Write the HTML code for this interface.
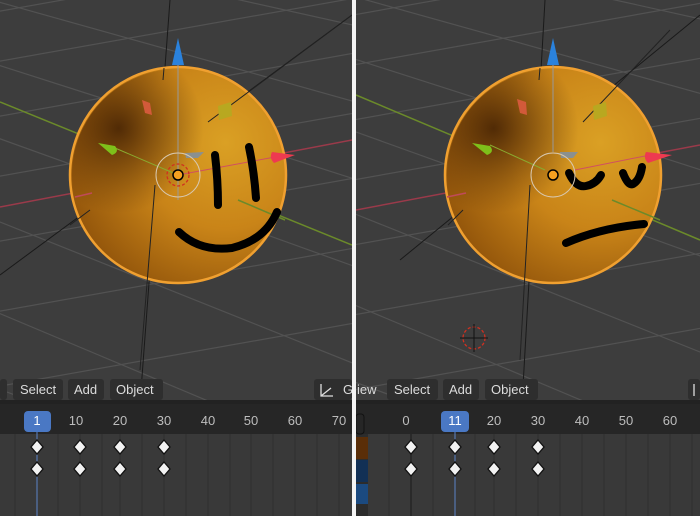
<!DOCTYPE html>
<html><head><style>
body{margin:0;width:700px;height:516px;overflow:hidden;background:#333;font-family:"Liberation Sans",sans-serif}
svg{display:block}
</style></head><body>
<svg width="700" height="516" viewBox="0 0 700 516" xmlns="http://www.w3.org/2000/svg">
<defs>
<clipPath id="cl"><rect x="0" y="0" width="352" height="404"/></clipPath>
<clipPath id="cr"><rect x="356" y="0" width="344" height="404"/></clipPath>
<radialGradient id="sg" cx="0.72" cy="0.35" r="0.8">
<stop offset="0" stop-color="#daa024"/><stop offset="0.5" stop-color="#c98418"/><stop offset="1" stop-color="#8f520a"/>
</radialGradient>
<radialGradient id="sh" cx="0.22" cy="0.28" r="0.4">
<stop offset="0" stop-color="#3e1d03" stop-opacity="0.85"/><stop offset="1" stop-color="#4a2505" stop-opacity="0"/>
</radialGradient>
<g id="grid" stroke="#525252" stroke-width="1.2" fill="none">
<path d="M-50 20 L400 -60 M-50 70 L400 -10 M-50 125 L400 45 M-50 185 L400 105 M-50 250 L400 170 M-50 320 L400 240 M-50 395 L400 315 M-50 470 L400 390"/>
<path d="M-80 -20 L420 120 M-80 40 L420 200 M-80 110 L420 290 M-80 190 L420 390 M-80 280 L420 490 M60 -40 L420 40 M-80 360 L300 500"/>
</g>
</defs>
<rect x="0" y="0" width="700" height="404" fill="#3d3d3d"/>
<!-- LEFT VIEWPORT -->
<g clip-path="url(#cl)">
<use href="#grid"/>
<line x1="0" y1="102" x2="352" y2="245" stroke="#6b8a2a" stroke-width="1.5"/>
<line x1="0" y1="207" x2="352" y2="140" stroke="#9a3a4a" stroke-width="1.5"/>
<line x1="170" y1="0" x2="140" y2="404" stroke="#1a1a1a" stroke-width="1"/>
<line x1="352" y1="15" x2="0" y2="275" stroke="#1a1a1a" stroke-width="1"/>
<ellipse cx="178" cy="175" rx="108" ry="108" fill="url(#sg)" stroke="#f0a030" stroke-width="2.5"/>
<ellipse cx="178" cy="175" rx="106" ry="106" fill="url(#sh)"/>
<line x1="164" y1="68" x2="163" y2="80" stroke="#222"/>
<line x1="352" y1="15" x2="208" y2="122" stroke="#222"/>
<line x1="155" y1="185" x2="140" y2="370" stroke="#222"/>
<line x1="90" y1="210" x2="70" y2="225" stroke="#222"/>
<line x1="75" y1="197" x2="92" y2="193" stroke="#c04a5a" stroke-width="1.5"/>
<line x1="238" y1="200" x2="285" y2="220" stroke="#6b8a2a" stroke-width="1.5"/>
<line x1="178" y1="60" x2="178" y2="200" stroke="#999" stroke-width="1"/>
<line x1="115" y1="148" x2="178" y2="175" stroke="#8aaa30" stroke-width="1"/>
<line x1="178" y1="175" x2="275" y2="157" stroke="#d05060" stroke-width="1"/>
<path d="M178 38 L172 65 L184 65 Z" fill="#2a82dd"/>
<path d="M272 152 L295 155 L274 163 Q269 158 272 152Z" fill="#ee3a50"/>
<path d="M98 143 L115 146 Q120 152 112 155 Z" fill="#7ec01a"/>
<path d="M142 100 L150 103 L152 115 L145 113Z" fill="#d25a3a"/>
<path d="M218 106 L231 102 L232 116 L219 120Z" fill="#b8a820"/>
<path d="M185 153 L204 152 L198 158 L186 158Z" fill="#8a9090"/>
<g stroke="#000" stroke-width="8" stroke-linecap="round" fill="none">
<path d="M215 155 Q218 180 218 205"/>
<path d="M249 147 Q254 170 256 198"/>
<path d="M179 232 Q200 252 232 248 Q265 240 277 212"/>
</g>
<circle cx="178" cy="175" r="22" fill="none" stroke="#d8c8b0" stroke-width="1"/>
<circle cx="178" cy="175" r="11" fill="none" stroke="#d03020" stroke-width="1.3" stroke-dasharray="3 2"/>
<circle cx="178" cy="175" r="5" fill="#f5a020" stroke="#000" stroke-width="1.5"/>
</g>
<!-- RIGHT VIEWPORT -->
<g clip-path="url(#cr)">
<g transform="translate(375,0)"><use href="#grid"/></g>
<line x1="356" y1="95" x2="700" y2="240" stroke="#6b8a2a" stroke-width="1.5"/>
<line x1="356" y1="210" x2="700" y2="145" stroke="#9a3a4a" stroke-width="1.5"/>
<line x1="545" y1="0" x2="522" y2="404" stroke="#1a1a1a"/>
<line x1="700" y1="15" x2="400" y2="260" stroke="#1a1a1a"/>
<ellipse cx="553" cy="175" rx="108" ry="108" fill="url(#sg)" stroke="#f0a030" stroke-width="2.5"/>
<ellipse cx="553" cy="175" rx="106" ry="106" fill="url(#sh)"/>
<line x1="540" y1="68" x2="539" y2="80" stroke="#222"/>
<line x1="670" y1="30" x2="583" y2="122" stroke="#222"/>
<line x1="530" y1="185" x2="520" y2="360" stroke="#222"/>
<line x1="463" y1="210" x2="448" y2="225" stroke="#222"/>
<line x1="447" y1="197" x2="466" y2="193" stroke="#c04a5a" stroke-width="1.5"/>
<line x1="612" y1="200" x2="660" y2="220" stroke="#6b8a2a" stroke-width="1.5"/>
<line x1="553" y1="60" x2="553" y2="152" stroke="#999"/>
<line x1="490" y1="145" x2="545" y2="170" stroke="#8aaa30"/>
<line x1="575" y1="170" x2="650" y2="155" stroke="#d05060"/>
<path d="M553 38 L547 65 L559 65 Z" fill="#2a82dd"/>
<path d="M646 152 L672 155 L648 163 Q643 158 646 152Z" fill="#ee3a50"/>
<path d="M472 143 L490 146 Q495 152 487 155 Z" fill="#7ec01a"/>
<path d="M517 99 L526 102 L527 115 L520 113Z" fill="#d25a3a"/>
<path d="M593 106 L606 102 L607 116 L594 120Z" fill="#b8a820"/>
<path d="M560 152 L578 152 L573 158 L561 158Z" fill="#8a9090"/>
<g stroke="#000" stroke-width="8" stroke-linecap="round" fill="none">
<path d="M569 173 Q576 188 586 186 Q596 184 601 175"/>
<path d="M623 173 Q628 186 633 184 Q640 180 642 167"/>
<path d="M566 243 Q600 228 644 224"/>
</g>
<circle cx="553" cy="175" r="22" fill="none" stroke="#d8c8b0" stroke-width="1"/>
<circle cx="553" cy="175" r="5" fill="#f5a020" stroke="#000" stroke-width="1.5"/>
<circle cx="474" cy="338" r="11" fill="none" stroke="#d03020" stroke-width="1.3" stroke-dasharray="3 2"/>
<path d="M474 324 V352 M460 338 H488" stroke="#111" stroke-width="1"/>
</g>
<!-- header buttons -->
<g font-size="13" fill="#dcdcdc">
<rect x="0" y="379" width="7" height="21" rx="3" fill="#2e2e2e"/>
<rect x="13" y="379" width="50" height="21" rx="3" fill="#2e2e2e"/><text x="20" y="394">Select</text>
<rect x="68" y="379" width="36" height="21" rx="3" fill="#2e2e2e"/><text x="74" y="394">Add</text>
<rect x="110" y="379" width="53" height="21" rx="3" fill="#2e2e2e"/><text x="116" y="394">Object</text>
<rect x="314" y="379" width="38" height="21" rx="3" fill="#2e2e2e"/>
<path d="M321 384 V396 H333 M321 396 L331 388" stroke="#ddd" fill="none" stroke-width="1.3"/><text x="343" y="394">G</text>
<text x="357" y="394">iew</text>
<rect x="387" y="379" width="51" height="21" rx="3" fill="#2e2e2e"/><text x="394" y="394">Select</text>
<rect x="443" y="379" width="36" height="21" rx="3" fill="#2e2e2e"/><text x="449" y="394">Add</text>
<rect x="485" y="379" width="53" height="21" rx="3" fill="#2e2e2e"/><text x="491" y="394">Object</text>
<rect x="688" y="379" width="12" height="21" rx="3" fill="#2e2e2e"/>
<path d="M694 384 V396" stroke="#ddd" stroke-width="1.3"/>
</g>
<rect x="0" y="400" width="700" height="4" fill="#222"/>
<!-- timeline -->
<rect x="0" y="404" width="352" height="112" fill="#393939"/>
<rect x="356" y="404" width="344" height="112" fill="#393939"/>
<rect x="0" y="404" width="352" height="30" fill="#262626"/>
<rect x="356" y="404" width="344" height="30" fill="#262626"/>
<g stroke="#2f2f2f" stroke-width="1">
<path d="M15 434V516M37 434V516M58 434V516M80 434V516M102 434V516M120 434V516M142 434V516M164 434V516M186 434V516M208 434V516M230 434V516M251 434V516M273 434V516M295 434V516M317 434V516M339 434V516"/>
<path d="M389 434V516M411 434V516M433 434V516M455 434V516M475 434V516M494 434V516M516 434V516M538 434V516M560 434V516M582 434V516M604 434V516M626 434V516M648 434V516M670 434V516M692 434V516"/>
</g>
<rect x="356" y="434" width="12" height="82" fill="#2c2c2c"/>
<rect x="356" y="437" width="12" height="22" fill="#5a2e08"/>
<rect x="356" y="460" width="12" height="22" fill="#123055"/>
<rect x="356" y="484" width="12" height="20" fill="#1b4a80"/>
<line x1="37" y1="430" x2="37" y2="516" stroke="#5a82c8"/>
<line x1="455" y1="430" x2="455" y2="516" stroke="#5a82c8"/>
<line x1="411" y1="434" x2="411" y2="516" stroke="#1a1a1a"/>
<rect x="356" y="414" width="8" height="20" rx="3" fill="none" stroke="#111"/>
<g font-size="13" fill="#bdbdbd" text-anchor="middle">
<rect x="24" y="411" width="27" height="21" rx="4" fill="#4a78c4"/>
<text x="37" y="425" fill="#fff">1</text>
<text x="76" y="425">10</text><text x="120" y="425">20</text><text x="164" y="425">30</text><text x="208" y="425">40</text><text x="251" y="425">50</text><text x="295" y="425">60</text><text x="339" y="425">70</text>
<text x="406" y="425">0</text>
<rect x="441" y="411" width="28" height="21" rx="4" fill="#4a78c4"/>
<text x="455" y="425" fill="#fff">11</text>
<text x="494" y="425">20</text><text x="538" y="425">30</text><text x="582" y="425">40</text><text x="626" y="425">50</text><text x="670" y="425">60</text>
</g>
<g fill="#f2f2f2" stroke="#111" stroke-width="1.3">
<path d="M0 -7 L6 0 L0 7 L-6 0Z" transform="translate(37,447)"/>
<path d="M0 -7 L6 0 L0 7 L-6 0Z" transform="translate(37,469)"/>
<path d="M0 -7 L6 0 L0 7 L-6 0Z" transform="translate(80,447)"/>
<path d="M0 -7 L6 0 L0 7 L-6 0Z" transform="translate(80,469)"/>
<path d="M0 -7 L6 0 L0 7 L-6 0Z" transform="translate(120,447)"/>
<path d="M0 -7 L6 0 L0 7 L-6 0Z" transform="translate(120,469)"/>
<path d="M0 -7 L6 0 L0 7 L-6 0Z" transform="translate(164,447)"/>
<path d="M0 -7 L6 0 L0 7 L-6 0Z" transform="translate(164,469)"/>
<path d="M0 -7 L6 0 L0 7 L-6 0Z" transform="translate(411,447)"/>
<path d="M0 -7 L6 0 L0 7 L-6 0Z" transform="translate(411,469)"/>
<path d="M0 -7 L6 0 L0 7 L-6 0Z" transform="translate(455,447)"/>
<path d="M0 -7 L6 0 L0 7 L-6 0Z" transform="translate(455,469)"/>
<path d="M0 -7 L6 0 L0 7 L-6 0Z" transform="translate(494,447)"/>
<path d="M0 -7 L6 0 L0 7 L-6 0Z" transform="translate(494,469)"/>
<path d="M0 -7 L6 0 L0 7 L-6 0Z" transform="translate(538,447)"/>
<path d="M0 -7 L6 0 L0 7 L-6 0Z" transform="translate(538,469)"/>
</g>
<rect x="352" y="0" width="4" height="516" fill="#f4f4f4"/>
</svg>
</body></html>
